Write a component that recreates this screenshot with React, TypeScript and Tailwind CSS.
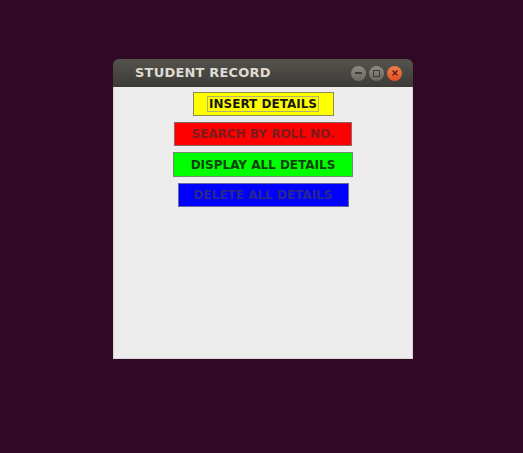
export default function App() {
  return (
    <div className="w-[523px] h-[453px] bg-[#300a24] pt-[59px] pl-[113px] font-['DejaVu_Sans',sans-serif]">
      <div className="w-[300px] flex flex-col">
        <div className="h-[28px] rounded-t-[6px] bg-gradient-to-b from-[#55534d] to-[#3c3b37] flex items-center pl-[22px] pr-[11px]">
          <span className="text-[13px] font-bold text-[#dfdbd2] tracking-[0.2px] flex-1">STUDENT RECORD</span>
          <div className="flex gap-[3px]">
            <div className="w-[15px] h-[15px] rounded-full bg-gradient-to-b from-[#8e8b85] to-[#6a6862] flex items-center justify-center">
              <div className="w-[7px] h-[1.5px] bg-[#3c3b37]" />
            </div>
            <div className="w-[15px] h-[15px] rounded-full bg-gradient-to-b from-[#8e8b85] to-[#6a6862] flex items-center justify-center">
              <div className="w-[7px] h-[7px] border border-[#3c3b37]" />
            </div>
            <div className="w-[15px] h-[15px] rounded-full bg-gradient-to-b from-[#f47a4d] to-[#e0531f] flex items-center justify-center">
              <svg width="6" height="6" viewBox="0 0 6 6">
                <path d="M0.5 0.5L5.5 5.5M5.5 0.5L0.5 5.5" stroke="#5a1e0a" strokeWidth="1.3" />
              </svg>
            </div>
          </div>
        </div>
        <div className="h-[272px] bg-[#ededed] flex flex-col items-center pt-[5px] gap-[6px] border-x border-b border-[#d9d4d6]">
          <button className="w-[141px] h-[24px] bg-[#ffff00] border border-[#8c8c50] flex items-center justify-center">
            <span className="px-[1px] border border-[#b0b070] text-[12px] font-bold text-[#1a1a1a] leading-[14px]">INSERT DETAILS</span>
          </button>
          <button className="w-[178px] h-[24px] bg-[#ff0000] border border-[#8a6a6a] text-[12px] font-bold text-[#7a1c1c]">SEARCH BY ROLL NO.</button>
          <button className="w-[180px] h-[25px] bg-[#00ff00] border border-[#6f8f6f] text-[12px] font-bold text-[#0c420c]">DISPLAY ALL DETAILS</button>
          <button className="w-[171px] h-[24px] bg-[#0000ff] border border-[#6a6a9a] text-[12px] font-bold text-[#28288c]">DELETE ALL DETAILS</button>
        </div>
      </div>
    </div>
  );
}
